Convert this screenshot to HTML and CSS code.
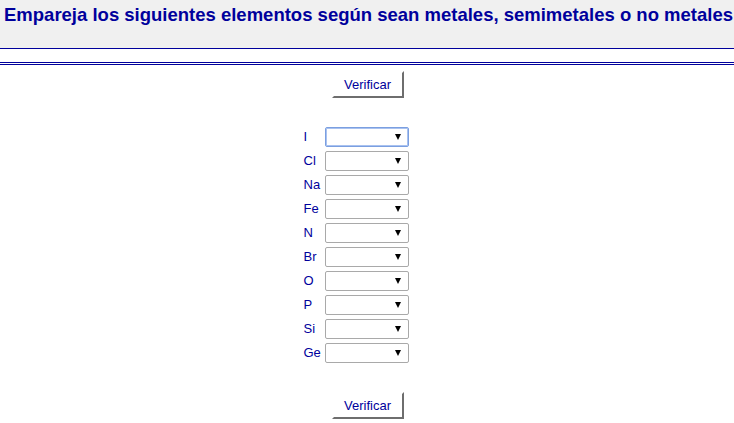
FILE: index.html
```html
<!DOCTYPE html>
<html lang="es">
<head>
<meta charset="utf-8">
<title>Empareja</title>
<link rel="stylesheet" href="styles.css">
</head>
<body>
<div class="header">
  <h1 class="title">Empareja los siguientes elementos según sean metales, semimetales o no metales</h1>
</div>
<div class="double-rule"></div>
<div class="actions actions-top"><button class="btn" type="button">Verificar</button></div>
<div class="quiz-wrap">
  <div class="quiz">
    <div class="row"><span class="label">I</span><div class="sel focused"><span class="arrow"></span></div></div>
    <div class="row"><span class="label">Cl</span><div class="sel"><span class="arrow"></span></div></div>
    <div class="row"><span class="label">Na</span><div class="sel"><span class="arrow"></span></div></div>
    <div class="row"><span class="label">Fe</span><div class="sel"><span class="arrow"></span></div></div>
    <div class="row"><span class="label">N</span><div class="sel"><span class="arrow"></span></div></div>
    <div class="row"><span class="label">Br</span><div class="sel"><span class="arrow"></span></div></div>
    <div class="row"><span class="label">O</span><div class="sel"><span class="arrow"></span></div></div>
    <div class="row"><span class="label">P</span><div class="sel"><span class="arrow"></span></div></div>
    <div class="row"><span class="label">Si</span><div class="sel"><span class="arrow"></span></div></div>
    <div class="row"><span class="label">Ge</span><div class="sel"><span class="arrow"></span></div></div>
  </div>
</div>
<div class="actions actions-bottom"><button class="btn" type="button">Verificar</button></div>
</body>
</html>
```
FILE: styles.css
```css
html, body {
  margin: 0;
  padding: 0;
  background: #ffffff;
  font-family: "Liberation Sans", Arial, sans-serif;
}
.header {
  background: #f0f0f0;
  border-bottom: 1px solid #00009c;
  box-sizing: border-box;
  height: 49px;
  padding: 4px 0 0 4px;
}
.title {
  margin: 0;
  font-size: 18.5px;
  font-weight: bold;
  color: #00009c;
  white-space: nowrap;
  line-height: 22px;
}
.double-rule {
  margin-top: 13px;
  height: 1px;
  border-top: 1px solid #00009c;
  border-bottom: 1px solid #00009c;
}
.actions {
  display: flex;
  justify-content: center;
}
.actions-top {
  margin-top: 6px;
}
.actions-bottom {
  margin-top: 29px;
}
.btn {
  width: 72px;
  height: 27px;
  margin-left: 1px;
  padding: 0;
  background: #ffffff;
  border: 2px solid;
  border-color: #ffffff #6e6e6e #6e6e6e #ffffff;
  font-family: "Liberation Sans", Arial, sans-serif;
  font-size: 13px;
  color: #00009c;
}
.quiz-wrap {
  display: flex;
  justify-content: center;
  padding-right: 22px;
  margin-top: 29px;
}
.quiz {
  display: grid;
  grid-template-columns: 21px 84px;
  row-gap: 4px;
}
.row {
  display: contents;
}
.label {
  font-size: 13px;
  color: #00009c;
  line-height: 20px;
}
.sel {
  position: relative;
  height: 20px;
  box-sizing: border-box;
  border: 1px solid #a9a9a9;
  border-radius: 2px;
  background: #ffffff;
}
.sel.focused {
  border-color: #7b9fe0;
  box-shadow: 0 0 0 1px #a9c2f0 inset;
}
.arrow {
  position: absolute;
  right: 7px;
  top: 6px;
  width: 0;
  height: 0;
  border-left: 3px solid transparent;
  border-right: 3px solid transparent;
  border-top: 6px solid #000000;
}
```
